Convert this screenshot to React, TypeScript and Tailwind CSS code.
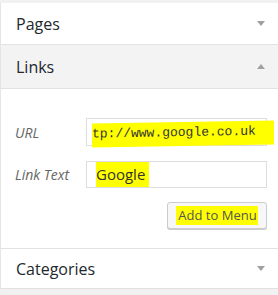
import React from "react";

function Arrow({ up }: { up?: boolean }) {
  return (
    <svg width="8" height="5" viewBox="0 0 8 5" className="text-[#a0a0a0]" aria-hidden>
      {up ? <path d="M0 5 L4 0 L8 5 Z" fill="currentColor" /> : <path d="M0 0 L8 0 L4 5 Z" fill="currentColor" />}
    </svg>
  );
}

function SectionTitle({ label, open, className }: { label: string; open?: boolean; className: string }) {
  return (
    <div className={`flex items-center justify-between border-b border-[#e2e2e2] pl-[15px] pr-[13px] text-[16px] text-[#23282d] ${className}`}>
      <span>{label}</span>
      <Arrow up={open} />
    </div>
  );
}

const mark = "bg-[#ffff00]";

export default function App() {
  return (
    <div className="h-[295px] w-[278px] overflow-hidden bg-[#f1f1f1] pt-[3px] font-['Open_Sans','Noto_Sans',sans-serif]">
      <div className="border-l border-[#e5e5e5] bg-white">
        <SectionTitle label="Pages" className="h-[42px]" />
        <SectionTitle label="Links" open className="h-[44px] bg-[#f3f3f3]" />

        <div className="flex h-[160px] flex-col border-b border-[#e2e2e2] pr-[11px] pt-[29px]">
          <div className="flex items-center">
            <label className="w-[85px] pl-[14px] text-[14px] italic text-[#666]">URL</label>
            <div className="flex h-[28px] min-w-0 flex-1 items-center border border-[#ddd] bg-white pl-[5px]">
              <span className={`${mark} mt-[4px] shrink-0 whitespace-nowrap -skew-y-1 pb-[3px] pt-[1px] pr-[18px] font-['Liberation_Mono',monospace] text-[13px] text-[#333]`}>
                tp://www.google.co.uk
              </span>
            </div>
          </div>
          <div className="mt-[15px] flex items-center">
            <label className="w-[85px] pl-[14px] text-[14px] italic text-[#666]">Link Text</label>
            <div className="flex h-[27px] flex-1 items-center border border-[#ddd] bg-white pl-[9px]">
              <span className={`${mark} py-[1px] pr-[4px] text-[15px] text-[#333]`}>Google</span>
            </div>
          </div>
          <div className="mt-[14px] flex justify-end">
            <button className="flex h-[27px] w-[100px] items-center justify-center rounded-[3px] border border-[#ccc] bg-[#f7f7f7] text-[13px] text-[#555] shadow-[0_1px_0_#ccc]">
              <span className={`${mark} pl-[2px] pr-[1px]`}>Add to Menu</span>
            </button>
          </div>
        </div>

        <SectionTitle label="Categories" className="h-[40px]" />
      </div>
    </div>
  );
}
